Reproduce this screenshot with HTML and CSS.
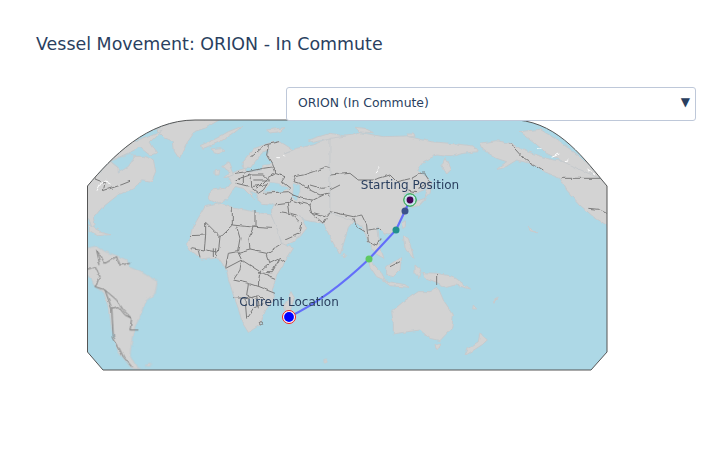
FILE: index.html
```
<!DOCTYPE html>
<html lang="en">
<head>
<meta charset="utf-8">
<title>Vessel Movement</title>
<link rel="stylesheet" href="styles.css">
</head>
<body>
<div class="figure">
  <h1 class="title">Vessel Movement: ORION - In Commute</h1>
  <div class="dropdown">
    <span>ORION (In Commute)</span>
    <span class="arrow">▼</span>
  </div>
  <svg class="map" viewBox="80 110 535 270" width="535" height="270">
    <defs>
      <clipPath id="frame">
        <path d="M87.5 186 C112 157 147 120 195 120 L518 120 C560 124 585 160 607 186 L607 352 L591 370 L103 370 L87.5 352 Z"/>
      </clipPath>
      <filter id="rough" x="80" y="110" width="535" height="270" filterUnits="userSpaceOnUse">
        <feTurbulence type="fractalNoise" baseFrequency="0.13" numOctaves="2" seed="4" result="noise"/>
        <feDisplacementMap in="SourceGraphic" in2="noise" scale="3.5" xChannelSelector="R" yChannelSelector="G"/>
        <feGaussianBlur stdDeviation="0.3"/>
      </filter>
    </defs>
    <g clip-path="url(#frame)">
      <rect class="ocean" x="80" y="110" width="535" height="270"/>
      <g filter="url(#rough)">

      <!-- North Atlantic side: Greenland, Canada, eastern USA -->
      <g transform="translate(85 118) scale(.33333)">
        <g class="land">
          <path d="M215 35 L235 25 L290 6 L360 3 L402 6 L362 30 L330 40 L302 80 L283 122 L268 100 L265 70 L240 60Z"/>
          <path d="M-10 205 L30 180 L75 130 L100 150 L100 165 L130 145 L150 115 L175 115 L205 125 L212 160 L200 190 L170 185 L150 210 L100 230 L75 250 L50 270 L25 300 L30 320 L22 335 L12 300 L-10 290Z"/>
          <path d="M50 152 L100 105 L140 72 L195 52 L232 36 L195 72 L215 105 L195 112 L165 88 L140 100 L80 128Z"/>
          <path d="M175 30 L225 22 L215 32 L180 42Z"/>
          <path d="M10 320 L50 343 L78 350 L40 353 L10 336Z"/>
        </g>
        <g class="water">
          <path d="M78 130 L135 106 L150 115 L130 145 L100 165 L100 148Z"/>
        </g>
        <g class="border">
          <path d="M30 183 L60 195 L55 218 L105 202 L135 190"/>
        </g>
        <g class="ice">
          <path d="M36 218 L50 192 L62 184 L76 202"/>
        </g>
      </g>

      <!-- South America and small Atlantic / Indian islands -->
      <g transform="translate(80 110) scale(.33333)">
        <g class="land">
          <path d="M0 420 L50 408 L75 425 L110 437 L140 450 L150 472 L190 490 L232 515 L225 550 L195 575 L180 620 L165 650 L155 690 L150 735 L170 772 L185 778 L155 775 L115 725 L95 655 L88 600 L72 548 L45 530 L22 492 L0 480Z"/>
          <path d="M732 748 L742 748 L742 755 L732 755Z"/>
          <path d="M197 762 L212 760 L210 768 L197 768Z"/>
        </g>
        <g class="border">
          <path d="M22 478 L45 470 L60 500 L45 530 L75 540 L110 570 L130 600 L155 625 L150 660 L175 660 M60 465 L50 420 L75 460 L110 440 M110 440 L120 465 L150 460 M75 540 L95 595 L100 680 L130 740 L155 770 M95 595 L115 590 L135 615 L155 625"/>
        </g>
      </g>

      <!-- Europe, Middle East, central Asia -->
      <g transform="translate(200 125) scale(.33333)">
        <g class="land">
          <path d="M25 222 L35 195 L75 190 L95 175 L85 155 L105 140 L135 130 L140 142 L185 135 L190 118 L215 115 L200 95 L210 70 L185 85 L165 110 L150 130 L130 130 L130 110 L165 70 L205 55 L240 50 L280 75 L252 85 L290 70 L340 60 L380 45 L455 32 L480 32 L480 270 L445 310 L420 390 L395 345 L370 295 L310 285 L298 270 L320 310 L300 335 L250 365 L215 275 L215 250 L225 238 L185 235 L175 225 L170 205 L150 198 L165 225 L130 190 L105 185 L80 225 L50 235Z"/>
          <path d="M65 125 L85 110 L100 150 L70 160 L90 140Z"/>
          <path d="M45 135 L62 132 L60 150 L45 150Z"/>
          <path d="M30 72 L62 68 L75 78 L45 85Z"/>
          <path d="M200 15 L255 8 L240 20 L210 24Z"/>
          <path d="M0 62 L50 40 L85 20 L130 2 L100 25 L60 50 L10 70Z"/>
          <path d="M325 45 L390 25 L445 35 L400 40 L340 52Z"/>
          <path d="M432 385 L440 395 L432 402 L428 392Z"/>
        </g>
        <g class="water">
          <path d="M210 172 L235 175 L265 190 L240 200 L190 200 L205 185Z"/>
          <path d="M280 175 L300 180 L300 200 L290 225 L278 215Z"/>
        </g>
        <g class="border">
          <path d="M150 100 L195 60 L240 50 M205 60 L200 90 L215 115 L225 145 L255 155 L245 170 L270 190"/>
          <path d="M105 145 L140 140 L190 130 L222 125 L225 145 L200 160 L170 190 M105 165 L150 150 L190 150 L205 165 L200 180 L150 185 L110 175 M150 150 L152 185 M130 150 L130 175 M160 165 L200 165 M150 185 L175 205 L190 195 L200 180"/>
          <path d="M280 155 L310 150 L340 140 L380 125 L420 135 L450 155 L440 175 L395 185 L365 190 L330 180 L320 190 L300 175 L285 170 L280 155"/>
          <path d="M320 190 L360 210 L385 205 L410 205 L435 190 M190 205 L265 200 L280 210 L272 225 L290 230 L330 240 L335 265 L370 295"/>
          <path d="M280 210 L305 220 L340 225 L380 205 L405 230 L395 255 L370 295 M335 265 L375 275 L395 255 M340 225 L330 240"/>
          <path d="M225 240 L265 235 L272 225 M265 235 L270 265 L290 270 M240 260 L270 265 L295 290 M255 345 L300 325 L305 295 M405 230 L420 265 L455 282"/>
        </g>
        <g class="ice">
          <path d="M232 98 L240 98 M250 90 L254 94 M395 176 L418 170"/>
        </g>
      </g>

      <!-- Africa and Madagascar -->
      <g transform="translate(185 215) scale(.33333)">
        <g class="land">
          <path d="M5 85 L15 65 L22 40 L60 -25 L110 -35 L150 -20 L258 0 L280 50 L290 85 L325 100 L300 140 L275 180 L262 225 L268 245 L240 290 L225 330 L190 352 L170 320 L160 280 L145 240 L130 190 L122 160 L100 128 L50 135 L20 110Z"/>
          <path d="M318 230 L328 248 L315 290 L300 297 L296 275Z"/>
        </g>
        <g class="border">
          <path d="M62 22 L105 65 L142 30 L210 37 L258 40 M142 -25 L142 30 M210 -15 L210 37 M15 62 L62 60 L62 22 M62 60 L58 105 L20 98 M105 65 L100 112 L62 105"/>
          <path d="M155 35 L165 70 L158 110 L130 115 L122 158 M205 35 L192 70 L195 105 L160 115 M195 105 L245 115 L290 85 M245 115 L255 145 L225 170 L222 190 M158 110 L170 135 L225 170 M255 145 L285 130 L300 140 M285 130 L262 170 L225 170 L235 175 L270 190"/>
          <path d="M122 160 L170 135 L165 165 L145 195 L190 205 L220 215 L222 190 M220 215 L270 235 M190 205 L185 240 L215 250 M145 248 L180 250 L215 240 L225 240 L245 260 M180 250 L185 310 L205 280 L235 265 M215 240 L220 280 M85 100 L85 125 M92 100 L92 125 M40 105 L45 130"/>
          <circle cx="228" cy="325" r="5"/>
        </g>
        <g class="ice">
          <path d="M232 170 L242 168"/>
        </g>
      </g>

      <!-- East Asia, Oceania, western North America -->
      <g transform="translate(340 110) scale(.33333)">
        <g class="land">
          <path d="M-30 85 L40 75 L60 68 L130 80 L200 78 L270 95 L330 100 L400 108 L415 125 L370 130 L330 140 L290 135 L250 155 L232 180 L270 210 L265 235 L225 250 L215 262 L205 245 L190 255 L205 285 L190 320 L165 365 L135 375 L120 355 L110 350 L115 395 L132 445 L105 430 L85 395 L65 345 L35 330 L-30 310Z"/>
          <path d="M45 52 L75 55 L100 68 L60 66Z M200 72 L220 72 L225 80 L205 80Z"/>
          <path d="M275 225 L270 250 L235 287 L215 292 L225 275 L255 265 L262 240Z"/>
          <path d="M262 205 L278 218 L268 225Z"/>
          <path d="M315 145 L332 180 L320 192 L305 165Z"/>
          <path d="M184 340 L196 332 L196 350 L188 355Z"/>
          <path d="M190 378 L205 385 L222 445 L195 412Z"/>
          <path d="M140 470 L185 440 L180 480 L160 500 L140 495Z"/>
          <path d="M85 445 L125 490 L137 512 L110 500 L90 470Z"/>
          <path d="M130 512 L195 524 L207 532 L150 527Z"/>
          <path d="M225 465 L242 480 L236 502 L225 490Z"/>
          <path d="M245 488 L290 490 L340 500 L392 537 L345 525 L320 532 L290 517 L260 505Z"/>
          <path d="M155 605 L190 575 L235 545 L270 545 L295 535 L310 570 L340 615 L335 655 L300 692 L270 685 L240 660 L190 667 L160 672 L160 640Z"/>
          <path d="M285 702 L302 702 L298 718 L288 716Z"/>
          <path d="M420 668 L442 690 L425 705 L375 737 L385 715 L415 695Z"/>
          <path d="M400 585 L410 597 L398 597Z M460 575 L475 565 L462 580Z M565 352 L590 368 L570 362Z"/>
          <path d="M420 100 L470 92 L510 100 L560 125 L640 150 L700 160 L770 200 L815 228 L815 355 L760 320 L720 285 L680 240 L660 205 L610 185 L590 165 L530 150 L490 175 L470 178 L500 155 L470 145 L430 120Z"/>
          <path d="M540 65 L600 58 L660 95 L720 140 L790 210 L700 170 L620 130 L580 95Z"/>
        </g>
        <g class="border">
          <path d="M-30 195 L30 190 L55 210 L100 210 L150 195 L170 215 L215 205 L250 185 L270 215 L235 235"/>
          <path d="M-30 240 L0 225 M205 240 L228 245"/>
          <path d="M-30 305 L40 320 L65 315 L80 345 L85 395 M40 320 L50 350 L75 365 M85 360 L120 355 M85 395 L110 405 L120 385"/>
          <path d="M150 470 L180 455"/>
          <path d="M290 492 L290 525"/>
          <path d="M510 100 L550 145 L610 180"/>
          <path d="M665 205 L782 205"/>
          <path d="M745 295 L775 298 L800 310"/>
        </g>
        <g class="ice">
          <path d="M105 190 L120 172"/>
          <path d="M590 116 L606 118"/>
          <path d="M635 142 L658 132"/>
          <path d="M675 152 L685 150 M742 180 L765 195"/>
        </g>
      </g>
      </g>
    </g>
    <path class="frame" d="M87.5 186 C112 157 147 120 195 120 L518 120 C560 124 585 160 607 186 L607 352 L591 370 L103 370 L87.5 352 Z"/>
    <path class="route" d="M410 200 L405 211 L396 230 L369 259 C345 282 318 303 289 317"/>
    <circle class="s1" cx="405" cy="211" r="3.5"/>
    <circle class="s2" cx="396" cy="230" r="3.5"/>
    <circle class="s3" cx="369" cy="259" r="3.5"/>
    <circle class="start-ring" cx="410" cy="200" r="6.2"/>
    <circle class="start-dot" cx="410" cy="200" r="3.4"/>
    <circle class="end-ring" cx="289" cy="317" r="6.5"/>
    <circle class="end-dot" cx="289" cy="317" r="4.9"/>
    <text class="label" x="410" y="189">Starting Position</text>
    <text class="label" x="289" y="306">Current Location</text>
  </svg>
</div>
</body>
</html>
```
FILE: styles.css
```
html, body {
  margin: 0;
  padding: 0;
  background: #fff;
}
.figure {
  position: relative;
  width: 706px;
  height: 450px;
  overflow: hidden;
  font-family: "DejaVu Sans", Verdana, sans-serif;
  color: #2a3f5f;
}
.title {
  margin: 0;
  height: 110px;
  box-sizing: border-box;
  padding: 34px 0 0 36px;
  font-size: 17.45px;
  line-height: 20px;
  font-weight: 400;
}
.map {
  display: block;
  margin-left: 80px;
}
.dropdown {
  position: absolute;
  z-index: 2;
  left: 286px;
  top: 87px;
  width: 410px;
  height: 34px;
  box-sizing: border-box;
  padding: 0 5px 4px 11px;
  display: flex;
  align-items: center;
  justify-content: space-between;
  background: #fff;
  border: 1px solid #bec8d9;
  border-radius: 3px;
  font-size: 12.4px;
}
.arrow {
  font-size: 12px;
  margin-top: -1px;
}
.ocean { fill: #add8e6; }
.land path {
  fill: #d3d3d3;
  stroke: #c6cacd;
  stroke-width: 3;
  stroke-linejoin: round;
}
.water path {
  fill: #add8e6;
  stroke: #c6cacd;
  stroke-width: 2;
}
.border path, .border circle {
  fill: none;
  stroke: #7a7a7a;
  stroke-width: 3;
  stroke-linejoin: round;
}
.ice path {
  fill: none;
  stroke: #fff;
  stroke-width: 3;
}
.frame {
  fill: none;
  stroke: #555;
  stroke-width: 1;
}
.route {
  fill: none;
  stroke: #636efa;
  stroke-width: 2.2;
}
.s1 { fill: #3b528b; }
.s2 { fill: #21918c; }
.s3 { fill: #5ec962; }
.start-ring {
  fill: #c8e4ec;
  stroke: #0a9a2a;
  stroke-width: 1;
}
.start-dot {
  fill: #440154;
}
.end-ring {
  fill: #fff;
  stroke: #f01c1c;
  stroke-width: 1;
}
.end-dot {
  fill: #0000ff;
}
.label {
  font-family: "DejaVu Sans", Verdana, sans-serif;
  font-size: 12px;
  fill: #2a3f5f;
  text-anchor: middle;
}
```
